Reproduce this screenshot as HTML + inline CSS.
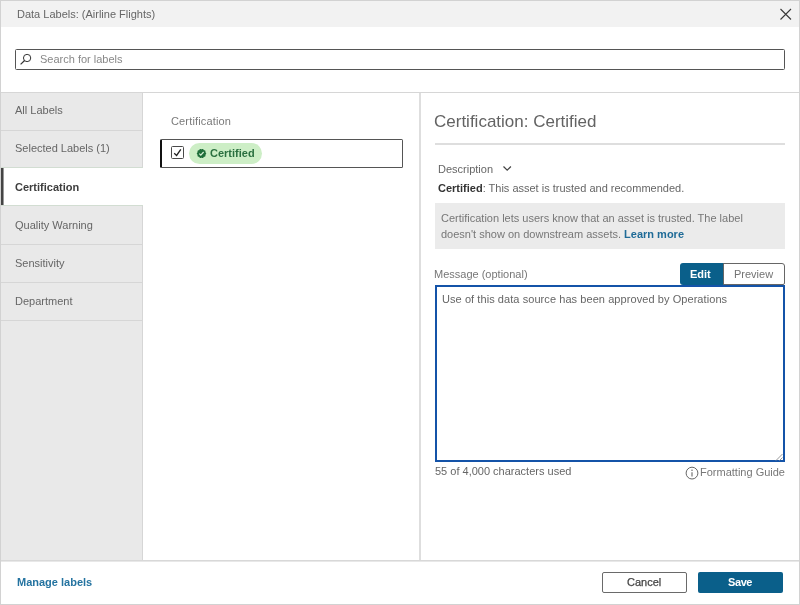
<!DOCTYPE html>
<html><head><meta charset="utf-8">
<style>
*{box-sizing:border-box;margin:0;padding:0}
html,body{width:800px;height:605px;overflow:hidden;background:#fff}
body{font-family:"Liberation Sans",sans-serif;font-size:11px;color:#666;position:relative}
.a{position:absolute;white-space:nowrap;line-height:13px;will-change:transform}
.box{position:absolute}
</style></head><body>
<!-- outer border -->
<div class="box" style="left:0;top:0;width:800px;height:605px;border:1px solid #d2d2d2"></div>
<!-- header -->
<div class="box" style="left:1px;top:1px;width:798px;height:26px;background:#f2f2f2"></div>
<div class="a" style="left:17px;top:8px;color:#666">Data Labels: (Airline Flights)</div>
<svg class="box" style="left:779px;top:8px" width="14" height="13" viewBox="0 0 14 13">
<path d="M1.5 1 L12 11.5 M12 1 L1.5 11.5" stroke="#3a3a3a" stroke-width="1.1" fill="none"/>
</svg>
<!-- search -->
<div class="box" style="left:15px;top:49px;width:770px;height:21px;border:1px solid #555;border-radius:1.5px"></div>
<svg class="box" style="left:19px;top:53px" width="14" height="14" viewBox="0 0 14 14">
<circle cx="8.1" cy="5" r="3.65" stroke="#333" stroke-width="1" fill="none"/>
<path d="M5.6 7.5 L1.6 11.4" stroke="#333" stroke-width="1.15"/>
</svg>
<div class="a" style="left:40px;top:53px;color:#888">Search for labels</div>
<!-- top separator -->
<div class="box" style="left:1px;top:92px;width:798px;height:1px;background:#d6d6d6"></div>
<!-- sidebar -->
<div class="box" style="left:1px;top:93px;width:141px;height:468px;background:#e9e9e9"></div>
<div class="box" style="left:142px;top:93px;width:1px;height:468px;background:#d6d6d6"></div>
<div class="box" style="left:1px;top:130px;width:141px;height:1px;background:#d6d6d6"></div>
<div class="box" style="left:1px;top:167px;width:142px;height:39px;background:#fff;border-top:1px solid #d2ddd2;border-bottom:1px solid #d2ddd2"></div>
<div class="box" style="left:1px;top:168px;width:2px;height:37px;background:#444"></div><div class="box" style="left:3px;top:168px;width:1px;height:37px;background:#999"></div>
<div class="box" style="left:1px;top:244px;width:141px;height:1px;background:#d6d6d6"></div>
<div class="box" style="left:1px;top:282px;width:141px;height:1px;background:#d6d6d6"></div>
<div class="box" style="left:1px;top:320px;width:141px;height:1px;background:#d6d6d6"></div>
<div class="a" style="left:15px;top:104px">All Labels</div>
<div class="a" style="left:15px;top:142px">Selected Labels (1)</div>
<div class="a" style="left:15px;top:181px;font-weight:bold;color:#3d3d3d">Certification</div>
<div class="a" style="left:15px;top:219px">Quality Warning</div>
<div class="a" style="left:15px;top:257px">Sensitivity</div>
<div class="a" style="left:15px;top:295px">Department</div>
<!-- middle panel -->
<div class="box" style="left:419px;top:93px;width:2px;height:468px;background:#dedede"></div>
<div class="a" style="left:171px;top:115px;color:#7a7a7a;letter-spacing:0.15px">Certification</div>
<div class="box" style="left:160px;top:139px;width:243px;height:29px;border:1px solid #555;border-left:2px solid #111;border-radius:1.5px"></div>
<div class="box" style="left:171px;top:146px;width:13px;height:13px;border:1px solid #4a4a4a;border-radius:1.5px"></div>
<svg class="box" style="left:171px;top:146px" width="13" height="13" viewBox="0 0 13 13">
<path d="M3.2 7.2 L5.6 9.4 L9.8 3.4" stroke="#222" stroke-width="1.3" fill="none"/>
</svg>
<div class="box" style="left:189px;top:143px;width:73px;height:21px;border-radius:11px;background:#cdeec6"></div>
<svg class="box" style="left:196px;top:148px" width="11" height="11" viewBox="0 0 11 11">
<path d="M10.25 5.50 L10.15 5.87 L9.90 6.20 L9.62 6.49 L9.45 6.78 L9.42 7.12 L9.46 7.52 L9.48 7.94 L9.34 8.29 L9.05 8.53 L8.65 8.65 L8.25 8.72 L7.94 8.86 L7.71 9.11 L7.52 9.46 L7.28 9.81 L6.97 10.02 L6.59 10.03 L6.20 9.90 L5.83 9.72 L5.50 9.65 L5.17 9.72 L4.80 9.90 L4.41 10.03 L4.03 10.02 L3.72 9.81 L3.48 9.46 L3.29 9.11 L3.06 8.86 L2.75 8.72 L2.35 8.65 L1.95 8.53 L1.66 8.29 L1.52 7.94 L1.54 7.52 L1.58 7.12 L1.55 6.78 L1.38 6.49 L1.10 6.20 L0.85 5.87 L0.75 5.50 L0.85 5.13 L1.10 4.80 L1.38 4.51 L1.55 4.22 L1.58 3.88 L1.54 3.48 L1.52 3.06 L1.66 2.71 L1.95 2.47 L2.35 2.35 L2.75 2.28 L3.06 2.14 L3.29 1.89 L3.48 1.54 L3.72 1.19 L4.03 0.98 L4.41 0.97 L4.80 1.10 L5.17 1.28 L5.50 1.35 L5.83 1.28 L6.20 1.10 L6.59 0.97 L6.97 0.98 L7.28 1.19 L7.52 1.54 L7.71 1.89 L7.94 2.14 L8.25 2.28 L8.65 2.35 L9.05 2.47 L9.34 2.71 L9.48 3.06 L9.46 3.48 L9.42 3.88 L9.45 4.22 L9.62 4.51 L9.90 4.80 L10.15 5.13Z" fill="#1f6e3a"/>
<path d="M3.3 5.6 L4.8 7.1 L7.6 4" stroke="#d8f0d6" stroke-width="1.2" fill="none"/>
</svg>
<div class="a" style="left:210px;top:147px;font-weight:bold;color:#2b7040">Certified</div>
<!-- right panel -->
<div class="a" style="left:434px;top:112px;font-size:17px;line-height:20px;color:#636363">Certification: Certified</div>
<div class="box" style="left:435px;top:143px;width:350px;height:2px;background:#dedede"></div>
<div class="a" style="left:438px;top:163px;color:#666">Description</div>
<svg class="box" style="left:502px;top:165px" width="11" height="8" viewBox="0 0 11 8">
<path d="M1.5 1.5 L5.2 5.2 L8.9 1.5" stroke="#444" stroke-width="1.2" fill="none"/>
</svg>
<div class="a" style="left:438px;top:182px;color:#666"><b style="color:#333">Certified</b>: This asset is trusted and recommended.</div>
<div class="box" style="left:435px;top:203px;width:350px;height:46px;background:#ebebeb"></div>
<div class="a" style="left:441px;top:210px;color:#777;line-height:16px;white-space:normal;width:340px">Certification lets users know that an asset is trusted. The label<br>doesn't show on downstream assets. <b style="color:#1f6b97">Learn more</b></div>
<div class="a" style="left:434px;top:268px;color:#777">Message (optional)</div>
<div class="box" style="left:680px;top:263px;width:44px;height:22px;background:#0a5f8a;border-radius:3px 0 0 3px"></div>
<div class="a" style="left:690px;top:268px;font-weight:bold;color:#fff">Edit</div>
<div class="box" style="left:723px;top:263px;width:62px;height:22px;border:1px solid #666;border-radius:0 3px 2px 0"></div>
<div class="a" style="left:734px;top:268px;color:#737373">Preview</div>
<div class="box" style="left:435px;top:285px;width:350px;height:177px;border:2px solid #1453a8"></div>
<div class="a" style="left:442px;top:293px;color:#666;letter-spacing:0.07px">Use of this data source has been approved by Operations</div>
<svg class="box" style="left:775px;top:453px" width="8" height="8" viewBox="0 0 8 8">
<path d="M1 7.5 L7.5 1 M4.5 7.5 L7.5 4.5" stroke="#999" stroke-width="1" fill="none"/>
</svg>
<div class="a" style="left:435px;top:465px;color:#666">55 of 4,000 characters used</div>
<svg class="box" style="left:685px;top:466px" width="14" height="14" viewBox="0 0 14 14">
<circle cx="7" cy="7.1" r="5.9" stroke="#666" stroke-width="1" fill="none"/>
<path d="M7 6.2 V10.4" stroke="#666" stroke-width="1.1"/>
<circle cx="7" cy="4.2" r="0.75" fill="#666"/>
</svg>
<div class="a" style="left:700px;top:466px;color:#777">Formatting Guide</div>
<!-- footer -->
<div class="box" style="left:1px;top:560px;width:798px;height:1px;background:#d8d8d8"></div><div class="box" style="left:1px;top:561px;width:798px;height:1px;background:#e8e8e8"></div>
<div class="a" style="left:17px;top:576px;font-weight:bold;color:#2473a0">Manage labels</div>
<div class="box" style="left:602px;top:572px;width:85px;height:21px;border:1px solid #6a6a6a;border-radius:2px"></div>
<div class="a" style="left:627px;top:576px;color:#444;-webkit-text-stroke:0.25px #444">Cancel</div>
<div class="box" style="left:698px;top:572px;width:85px;height:21px;background:#0a5f8a;border-radius:2px"></div>
<div class="a" style="left:728px;top:576px;font-weight:bold;color:#fff;letter-spacing:-0.4px">Save</div>
</body></html>
